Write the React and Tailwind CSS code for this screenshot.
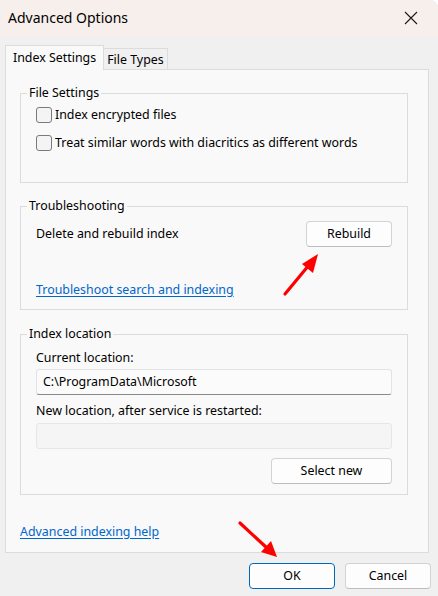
import React from "react";

const font = { fontFamily: '"Noto Sans", "Open Sans", sans-serif' };

function Checkbox({ label }) {
  return (
    <div className="flex items-center h-[16px]">
      <span className="w-[16px] h-[16px] rounded-[3px] border border-[#7a7a7a] bg-[#f4f4f4] shrink-0" />
      <span className="ml-[3px] text-[12.4px] leading-[16px] text-black">{label}</span>
    </div>
  );
}

function Button({ children, className = "", primary = false }) {
  return (
    <div
      className={
        "h-[26px] flex items-center justify-center rounded-[4px] bg-[#fdfdfd] text-[12.4px] text-black border " +
        (primary ? "border-[#0067c0]" : "border-[#d3d3d3] border-b-[#bdbdbd]") +
        " " +
        className
      }
    >
      {children}
    </div>
  );
}

function Group({ title, className = "", innerClass = "", children }) {
  return (
    <fieldset className={"border border-[#dcdcdc] " + className}>
      <legend className="ml-[6px] px-[2px] text-[12.4px] leading-[16px] text-black">{title}</legend>
      <div className={innerClass}>{children}</div>
    </fieldset>
  );
}

export default function App() {
  return (
    <div className="relative w-[438px] h-[596px] bg-[#f0f0f0] overflow-hidden rounded-tr-[8px]" style={font}>
      {/* Title bar */}
      <div className="h-[37px] bg-[#f7efeb] flex items-center justify-between pl-[8px] pr-[20px]">
        <span className="text-[14px] text-black leading-none -mt-[1px]">Advanced Options</span>
        <svg width="14" height="14" viewBox="0 0 14 14" className="-mt-[1px]">
          <path d="M1 1 L13 13 M13 1 L1 13" stroke="#1a1a1a" strokeWidth="1.1" />
        </svg>
      </div>

      {/* Body */}
      <div className="px-[5px] pt-[8px] pr-[9px]">
        {/* Tabs */}
        <div className="flex items-end h-[24px]">
          <div className="relative z-10 h-[25px] -mb-px px-[7px] flex items-start pt-[3px] bg-[#f9f9f9] border border-b-0 border-[#dcdcdc] text-[12.4px] text-black">
            Index Settings
          </div>
          <div className="h-[21px] px-[3px] flex items-center pt-[2px] bg-[#f0f0f0] border border-l-0 border-b-0 border-[#dcdcdc] text-[12.4px] text-black">
            File Types
          </div>
        </div>

        {/* Panel */}
        <div className="h-[484px] bg-[#f9f9f9] border border-[#dcdcdc] pl-[14px] pr-[20px] pt-[15px] flex flex-col">
          <Group title="File Settings" className="h-[98px]" innerClass="pl-[15px] pt-[6px]">
            <div className="flex flex-col gap-[12px]">
              <Checkbox label="Index encrypted files" />
              <Checkbox label="Treat similar words with diacritics as different words" />
            </div>
          </Group>

          <Group title="Troubleshooting" className="mt-[15px] h-[112px]" innerClass="pl-[15px] pr-[15px] pt-[7px]">
            <div className="flex items-center justify-between">
              <span className="text-[12.4px] text-black">Delete and rebuild index</span>
              <Button className="w-[86px]">Rebuild</Button>
            </div>
            <div className="mt-[35px] text-[12.4px] text-[#0066cc] underline underline-offset-2 leading-[16px]">
              Troubleshoot search and indexing
            </div>
          </Group>

          <Group title="Index location" className="mt-[16px] h-[169px]" innerClass="pl-[15px] pr-[15px] pt-[8px]">
            <div className="text-[12.4px] text-black leading-[16px]">Current location:</div>
            <div className="mt-[3px] h-[26px] rounded-[3px] bg-[#fbfbfb] border border-[#e3e3e3] border-b-[#8a8a8a] flex items-center pl-[6px] text-[12.4px] text-black">
              C:\ProgramData\Microsoft
            </div>
            <div className="mt-[8px] text-[12.4px] text-black leading-[16px]">New location, after service is restarted:</div>
            <div className="mt-[4px] h-[26px] rounded-[3px] bg-[#f5f5f5] border border-[#e6e6e6]" />
            <div className="mt-[9px] flex justify-end">
              <Button className="w-[121px]">Select new</Button>
            </div>
          </Group>

          <div className="mt-[29px] text-[12.4px] text-[#0066cc] underline underline-offset-2 leading-[16px]">
            Advanced indexing help
          </div>
        </div>

        {/* Footer buttons */}
        <div className="flex justify-end gap-[10px] mt-[10px] -mr-[2px]">
          <Button primary className="w-[86px]">OK</Button>
          <Button className="w-[86px]">Cancel</Button>
        </div>
      </div>

      {/* Red annotation arrows */}
      <svg className="absolute inset-0 pointer-events-none" width="438" height="596" viewBox="0 0 438 596">
        <line x1="285" y1="294" x2="309" y2="265" stroke="#ff0000" strokeWidth="3.2" strokeLinecap="round" />
        <polygon points="318,254 302,264 313,273" fill="#ff0000" />
        <line x1="240" y1="523" x2="267" y2="548" stroke="#ff0000" strokeWidth="3.2" strokeLinecap="round" />
        <polygon points="277,557 261,552 271,541" fill="#ff0000" />
      </svg>
    </div>
  );
}
